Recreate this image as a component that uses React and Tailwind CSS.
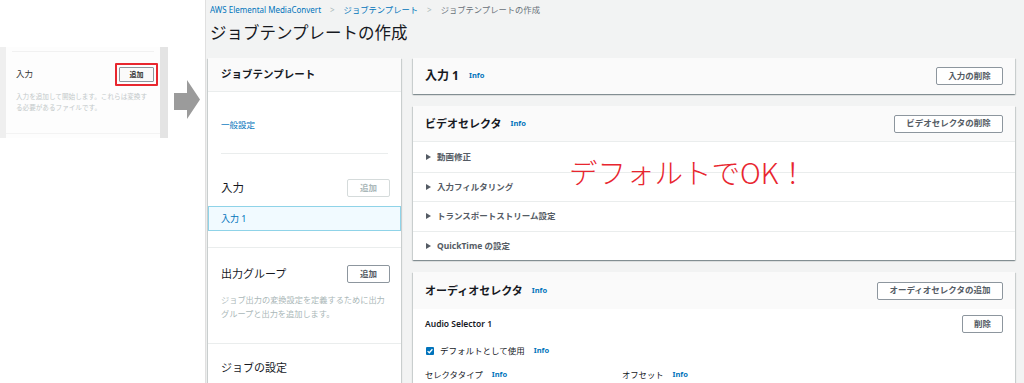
import React from "react";

const F = "font-['Noto_Sans','Noto_Sans_CJK_JP',sans-serif]";

function Info({ className = "" }) {
  return <span className={`text-[7.5px] font-bold text-[#0073bb] leading-none ${className}`}>Info</span>;
}

function Btn({ children, className = "", disabled = false }) {
  return (
    <div
      className={`flex items-center justify-center h-[18px] border rounded-[2px] text-[8.5px] font-bold leading-none ${
        disabled ? "border-[#d5dbdb] text-[#aab7b8] bg-white" : "border-[#8d969e] text-[#545b64] bg-white"
      } ${className}`}
    >
      {children}
    </div>
  );
}

function Tri() {
  return (
    <svg width="5" height="6" viewBox="0 0 5 6" className="shrink-0">
      <path d="M0 0 L5 3 L0 6 Z" fill="#545b64" />
    </svg>
  );
}

const cardShadow =
  "shadow-[0_1px_1px_0_rgba(0,28,36,0.3),1px_1px_1px_0_rgba(0,28,36,0.12),-1px_1px_1px_0_rgba(0,28,36,0.12)]";

export default function App() {
  return (
    <div className={`${F} relative w-[1024px] h-[383px] overflow-hidden flex bg-white text-[#16191f]`}>
      {/* left thumbnail area */}
      <div className="w-[205px] shrink-0 flex items-start">
        <div className="mt-[47px] w-[168px] h-[91px] flex bg-[#efefef]">
          <div className="ml-[6px] w-[154px] h-full bg-[#fdfdfd] flex flex-col">
            <div className="mt-[4px] mx-[6px] border-t border-[#f1f1f1]" />
            <div className="flex items-center justify-between pl-[10px] pr-[2px] mt-[11px] h-[23px]">
              <span className="text-[8.5px] text-[#333]">入力</span>
              <div className="border-2 border-[#e8272f] p-[2px] rounded-[1px]">
                <div className="w-[35px] h-[15px] border border-[#8d969e] rounded-[1px] bg-[#fafafa] flex items-center justify-center text-[7px] font-bold text-[#333] leading-none">
                  追加
                </div>
              </div>
            </div>
            <div className="pl-[10px] w-[145px] mt-[5px] text-[6.6px] leading-[11px] text-[#c3c9ca]">
              入力を追加して開始します。これらは変換する必要があるファイルです。
            </div>
            <div className="mt-auto mb-[4px] border-t border-[#f3f3f3]" />
          </div>
          <div className="ml-auto w-[8px] h-full bg-[#e4e4e4]" />
        </div>
        <svg width="27" height="40" viewBox="0 0 27 40" className="mt-[80px] ml-[6px]">
          <path d="M0 13 H13 V0 L26 19.5 L13 39 V30 H0 Z" fill="#9b9b9b" />
        </svg>
      </div>

      {/* main console */}
      <div className="flex-1 h-[383px] overflow-hidden bg-[#f2f3f3] border-l border-[#e0e0e0] pl-[2px] pr-[8px] flex flex-col">
        <div className="shrink-0 h-[20px] flex items-center gap-[9px] ml-[2px] text-[8px] leading-none">
          <span className="text-[#0073bb]">AWS Elemental MediaConvert</span>
          <span className="text-[#aab7b8]">&gt;</span>
          <span className="text-[#0073bb] text-[8.3px]">ジョブテンプレート</span>
          <span className="text-[#aab7b8]">&gt;</span>
          <span className="text-[#687078] text-[8.3px]">ジョブテンプレートの作成</span>
        </div>
        <div className="shrink-0 h-[26px] flex items-center ml-[2px] text-[16.5px] text-[#16191f] leading-none">
          ジョブテンプレートの作成
        </div>

        <div className="shrink-0 mt-[12px] flex gap-[12px] items-start">
          {/* left card */}
          <div className={`shrink-0 w-[193px] bg-white ${cardShadow} h-[340px] flex flex-col`}>
            <div className="shrink-0 h-[34px] px-[13px] flex items-center bg-[#fafafa] border-b border-[#eaeded] text-[10.5px] font-bold leading-none">
              ジョブテンプレート
            </div>
            <div className="shrink-0 h-[61px] pt-[18px] px-[13px]">
              <span className="text-[8.5px] leading-[14px] text-[#0073bb]">一般設定</span>
            </div>
            <div className="shrink-0 mx-[13px] border-t border-[#eaeded]" />
            <div className="shrink-0 h-[52px] flex items-end justify-between pb-[9px] pl-[13px] pr-[11px]">
              <span className="text-[11.5px] leading-[18px]">入力</span>
              <Btn disabled className="w-[43px]">追加</Btn>
            </div>
            <div className="shrink-0 h-[25px] bg-[#f1faff] border border-[#8fd3e8] flex items-center px-[12px] text-[9px] text-[#0073bb] leading-none">
              入力 1
            </div>
            <div className="shrink-0 h-[16px]" />
            <div className="shrink-0 border-t border-[#eaeded] h-[96px] pt-[17px]">
              <div className="flex items-center justify-between pl-[13px] pr-[11px]">
                <span className="text-[11px] leading-[18px]">出力グループ</span>
                <Btn className="w-[43px]">追加</Btn>
              </div>
              <div className="mt-[10px] ml-[13px] w-[168px] text-[8.2px] leading-[14px] text-[#aab7b8]">
                ジョブ出力の変換設定を定義するために出力グループと出力を追加します。
              </div>
            </div>
            <div className="shrink-0 border-t border-[#eaeded] pt-[10px] px-[13px]">
              <span className="text-[11px] leading-[18px]">ジョブの設定</span>
            </div>
          </div>

          {/* right column */}
          <div className="shrink-0 w-[602px] flex flex-col gap-[12px]">
            <div className={`shrink-0 h-[36px] bg-[#fafafa] ${cardShadow} flex items-center justify-between pl-[12px] pr-[12px]`}>
              <div className="flex items-center gap-[10px]">
                <span className="text-[12px] font-bold leading-none">入力 1</span>
                <Info />
              </div>
              <Btn className="w-[67px]">入力の削除</Btn>
            </div>

            <div className={`shrink-0 bg-white ${cardShadow} flex flex-col`}>
              <div className="h-[36px] bg-[#fafafa] border-b border-[#eaeded] flex items-center justify-between pl-[12px] pr-[12px]">
                <div className="flex items-center gap-[9px]">
                  <span className="text-[11px] font-bold leading-none">ビデオセレクタ</span>
                  <Info />
                </div>
                <Btn className="w-[109px]">ビデオセレクタの削除</Btn>
              </div>
              {["動画修正", "入力フィルタリング", "トランスポートストリーム設定", "QuickTime の設定"].map((t, i) => (
                <div
                  key={t}
                  className={`h-[29.5px] flex items-center gap-[6px] pl-[13px] ${i > 0 ? "border-t border-[#eaeded]" : ""}`}
                >
                  <Tri />
                  <span className="text-[8.5px] font-bold text-[#545b64] leading-none">{t}</span>
                </div>
              ))}
            </div>

            <div className={`shrink-0 bg-white ${cardShadow} flex flex-col h-[140px]`}>
              <div className="shrink-0 h-[37px] bg-[#fafafa] flex items-center justify-between pl-[12px] pr-[12px]">
                <div className="flex items-center gap-[9px]">
                  <span className="text-[11px] font-bold leading-none">オーディオセレクタ</span>
                  <Info />
                </div>
                <Btn className="w-[126px]">オーディオセレクタの追加</Btn>
              </div>
              <div className="shrink-0 h-[28px] mt-[1px] flex items-center justify-between pl-[12px] pr-[12px]">
                <span className="text-[8.5px] font-semibold leading-none text-[#16191f]">Audio Selector 1</span>
                <Btn className="w-[41px]">削除</Btn>
              </div>
              <div className="shrink-0 h-[26px] flex items-center pl-[13px]">
                <svg width="8" height="8" viewBox="0 0 8 8" className="shrink-0">
                  <rect x="0" y="0" width="8" height="8" rx="1" fill="#0073bb" />
                  <path d="M1.6 4.1 L3.3 5.7 L6.4 2.3" stroke="white" strokeWidth="1.3" fill="none" />
                </svg>
                <span className="ml-[6px] text-[8.5px] text-[#16191f] leading-none">デフォルトとして使用</span>
                <Info className="ml-[9px]" />
              </div>
              <div className="shrink-0 h-[22px] flex items-center pl-[12px]">
                <div className="w-[197px] flex items-center gap-[9px]">
                  <span className="text-[8.3px] text-[#16191f] leading-none">セレクタタイプ</span>
                  <Info />
                </div>
                <div className="flex items-center gap-[9px]">
                  <span className="text-[8.3px] text-[#16191f] leading-none">オフセット</span>
                  <Info />
                </div>
              </div>
              <div className="shrink-0 flex pl-[12px] gap-[13px]">
                <div className="w-[184px] h-[10px] border-t border-[#aab7b8]" />
                <div className="w-[187px] h-[10px] border-t border-[#aab7b8]" />
              </div>
            </div>
          </div>
        </div>
      </div>

      {/* annotation overlay */}
      <div className="absolute left-[569px] top-[155px] text-[28.5px] leading-[34px] text-[#e8262f] font-light font-['Noto_Sans_CJK_JP',sans-serif] whitespace-nowrap">
        デフォルトでOK！
      </div>
    </div>
  );
}
